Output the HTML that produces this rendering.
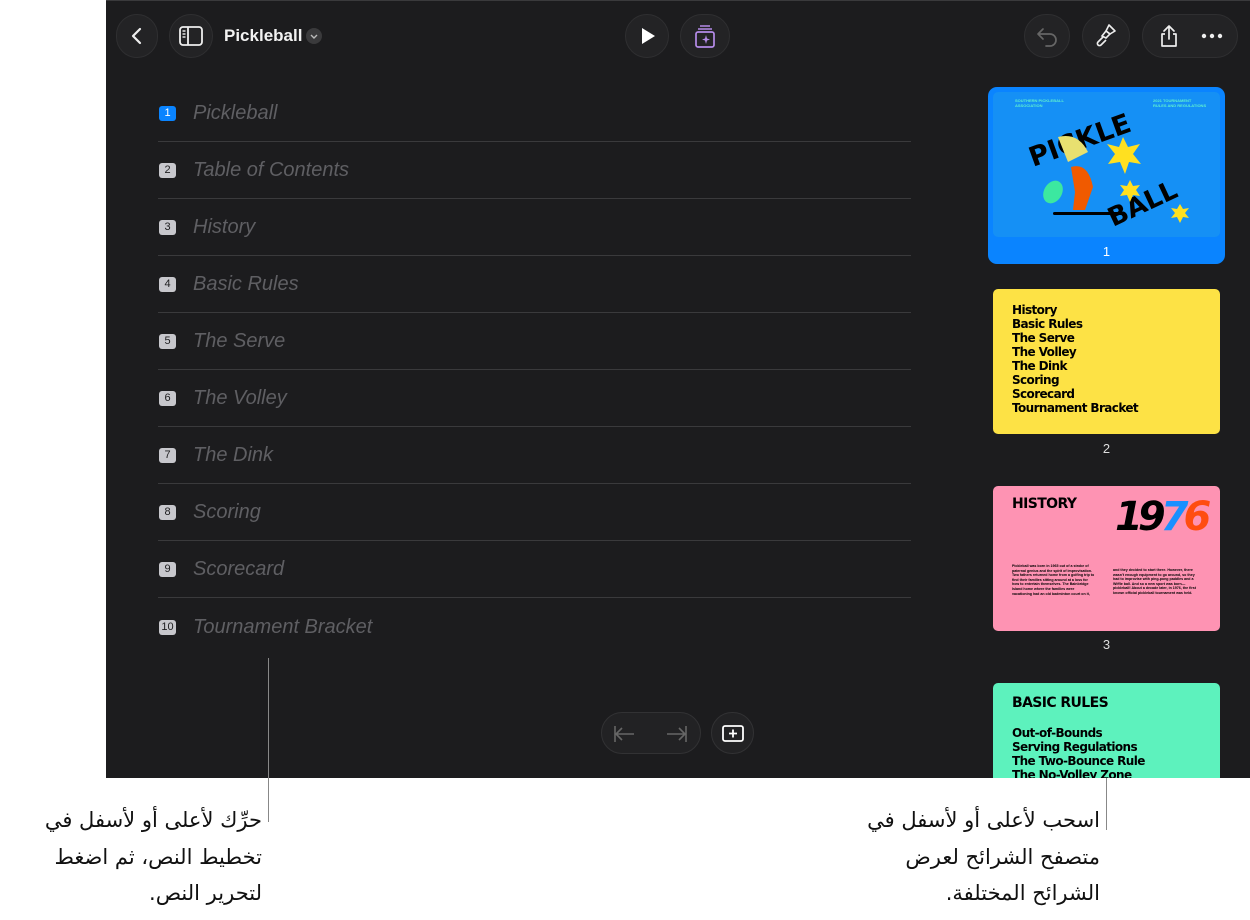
<!DOCTYPE html>
<html><head><meta charset="utf-8">
<style>
*{margin:0;padding:0;box-sizing:border-box}
body{width:1250px;height:920px;background:#fff;position:relative;overflow:hidden;font-family:"Liberation Sans",sans-serif}
#scr{position:absolute;left:106px;top:0;width:1144px;height:778px;background:#1c1c1e;overflow:hidden;border-top:1px solid #3a3a3c}
.btn{position:absolute;top:13px;height:44px;border-radius:22px;background:#232325;border:1px solid #2f2f31;display:flex;align-items:center;justify-content:center}
.row{position:absolute;left:52px;width:753px;height:57px;border-bottom:1px solid #3a3a3c}
.row .b{position:absolute;left:1px;top:21px;height:15px;min-width:17px;padding:0 2px;border-radius:3px;background:#c7c7cc;color:#1c1c1e;font-size:11px;line-height:15px;text-align:center}
.row .t{position:absolute;left:35px;top:17px;font-size:20px;font-style:italic;color:#5f5f63}
.sl{position:absolute;left:887px;width:227px;height:145px;border-radius:5px;overflow:hidden}
.num{position:absolute;left:887px;width:227px;text-align:center;color:#ddd;font-size:13px}
.slt{font-weight:bold;color:#000;font-size:12px;line-height:14px;font-family:"DejaVu Sans",sans-serif;letter-spacing:-0.6px}
.ar{position:absolute;font-family:"DejaVu Sans","Noto Sans CJK SC",sans-serif;font-size:21px;line-height:36.5px;text-align:right;direction:rtl;color:#111}
</style></head><body>
<div id="scr">
 <div class="btn" style="left:10px;width:42px"><svg width="20" height="20" viewBox="0 0 20 20"><path d="M13 3 L6 10 L13 17" stroke="#eee" stroke-width="2.2" fill="none" stroke-linecap="round" stroke-linejoin="round"/></svg></div>
 <div class="btn" style="left:63px;width:44px"><svg width="26" height="22" viewBox="0 0 26 22"><rect x="2" y="2" width="22" height="18" rx="3" stroke="#eee" stroke-width="1.8" fill="none"/><line x1="10" y1="2" x2="10" y2="20" stroke="#eee" stroke-width="1.8"/><line x1="4.5" y1="6" x2="7.5" y2="6" stroke="#eee" stroke-width="1.4"/><line x1="4.5" y1="9" x2="7.5" y2="9" stroke="#eee" stroke-width="1.4"/><line x1="4.5" y1="12" x2="7.5" y2="12" stroke="#eee" stroke-width="1.4"/></svg></div>
 <div style="position:absolute;left:118px;top:25px;color:#f2f2f2;font-weight:bold;font-size:17px">Pickleball</div>
 <div style="position:absolute;left:200px;top:27px;width:16px;height:16px;border-radius:8px;background:#3a3a3c"><svg width="16" height="16"><path d="M5 7 L8 10 L11 7" stroke="#bbb" stroke-width="1.4" fill="none"/></svg></div>
 <div class="btn" style="left:519px;width:44px"><svg width="20" height="20"><path d="M5 2 L18 10 L5 18 Z" fill="#fff"/></svg></div>
 <div class="btn" style="left:574px;width:50px"><svg width="26" height="26" viewBox="0 0 26 26"><line x1="8" y1="3" x2="18" y2="3" stroke="#b58be8" stroke-width="1.5"/><line x1="6" y1="6" x2="20" y2="6" stroke="#b58be8" stroke-width="1.5"/><rect x="4" y="9" width="18" height="15" rx="2" stroke="#b58be8" stroke-width="1.7" fill="none"/><path d="M14 12 L15 15.5 L18 16.5 L15 17.5 L14 21 L13 17.5 L10 16.5 L13 15.5Z" fill="#b58be8"/></svg></div>
 <div class="btn" style="left:918px;width:46px"><svg width="24" height="22"><path d="M8 4 L3 9 L8 14 M3 9 H15 A6 6 0 0 1 15 21 H11" stroke="#666" stroke-width="1.7" fill="none" stroke-linecap="round" stroke-linejoin="round"/></svg></div>
 <div class="btn" style="left:976px;width:48px"><svg width="24" height="26" viewBox="0 0 24 26"><path d="M15 2 L21 8 L16 11 L12 8 Z" stroke="#eee" stroke-width="1.6" fill="none" stroke-linejoin="round"/><path d="M12 8 L16 11 L12 15 L8 13 Z" stroke="#eee" stroke-width="1.6" fill="none"/><path d="M9 14 L4 19 A2 2 0 0 0 7 22 L12 17" stroke="#eee" stroke-width="1.6" fill="none"/></svg></div>
 <div class="btn" style="left:1036px;width:96px;justify-content:space-between;padding:0 14px 0 16px"><svg width="20" height="24" viewBox="0 0 20 24"><path d="M10 2 V15 M5 7 L10 2 L15 7" stroke="#eee" stroke-width="1.7" fill="none" stroke-linecap="round" stroke-linejoin="round"/><path d="M6 10 H3 V22 H17 V10 H14" stroke="#eee" stroke-width="1.7" fill="none" stroke-linejoin="round"/></svg><svg width="22" height="6"><circle cx="3" cy="3" r="2.2" fill="#eee"/><circle cx="11" cy="3" r="2.2" fill="#eee"/><circle cx="19" cy="3" r="2.2" fill="#eee"/></svg></div>

 <div class="row" style="top:84px"><div class="b" style="background:#0a84ff;color:#fff">1</div><div class="t">Pickleball</div></div>
 <div class="row" style="top:141px"><div class="b">2</div><div class="t">Table of Contents</div></div>
 <div class="row" style="top:198px"><div class="b">3</div><div class="t">History</div></div>
 <div class="row" style="top:255px"><div class="b">4</div><div class="t">Basic Rules</div></div>
 <div class="row" style="top:312px"><div class="b">5</div><div class="t">The Serve</div></div>
 <div class="row" style="top:369px"><div class="b">6</div><div class="t">The Volley</div></div>
 <div class="row" style="top:426px"><div class="b">7</div><div class="t">The Dink</div></div>
 <div class="row" style="top:483px"><div class="b">8</div><div class="t">Scoring</div></div>
 <div class="row" style="top:540px"><div class="b">9</div><div class="t">Scorecard</div></div>
 <div class="row" style="top:598px;border-bottom:none"><div class="b">10</div><div class="t">Tournament Bracket</div></div>

 <div style="position:absolute;left:495px;top:711px;width:100px;height:42px;border-radius:21px;background:#222224;border:1px solid #323234">
  <svg width="100" height="42" style="position:absolute;left:0;top:0"><path d="M13 13 V29 M14 21 H32 M20 15 L14 21 L20 27" stroke="#666" stroke-width="1.6" fill="none"/><path d="M84 13 V29 M65 21 H83 M77 15 L83 21 L77 27" stroke="#666" stroke-width="1.6" fill="none"/></svg>
 </div>
 <div style="position:absolute;left:605px;top:711px;width:43px;height:42px;border-radius:21px;background:#222224;border:1px solid #323234"><svg width="43" height="42"><rect x="11" y="13" width="20" height="15" rx="2" stroke="#fff" stroke-width="1.8" fill="none"/><path d="M21 16.5 V24.5 M17 20.5 H25" stroke="#fff" stroke-width="1.8"/></svg></div>

 <div style="position:absolute;left:882px;top:86px;width:237px;height:177px;border-radius:9px;background:#0a84ff"></div>
 <div class="sl" style="top:91px;background:#1590f5">
  <div style="position:absolute;left:22px;top:6px;color:#5ef0d0;font-size:4px;font-weight:bold">SOUTHERN PICKLEBALL<br>ASSOCIATION</div>
  <div style="position:absolute;left:160px;top:6px;color:#5ef0d0;font-size:4px;font-weight:bold">2021 TOURNAMENT<br>RULES AND REGULATIONS</div>
  <svg width="227" height="145" style="position:absolute;left:0;top:0">
   <text x="40" y="75" font-family="DejaVu Sans" font-weight="bold" font-size="27" fill="#000" transform="rotate(-20 40 75)">PICKLE</text>
   <text x="120" y="135" font-family="DejaVu Sans" font-weight="bold" font-size="26" fill="#000" transform="rotate(-25 120 135)">BALL</text>
   <path d="M78 75 Q95 70 100 95 L92 118 L80 118 L82 100 Z" fill="#f05a00"/>
   <path d="M65 45 Q85 40 95 60 L75 70 Z" fill="#e8e070"/>
   <ellipse cx="60" cy="100" rx="9" ry="12" fill="#3ce8a0" transform="rotate(30 60 100)"/>
   <path d="M130 45 L135 55 L147 52 L140 62 L148 72 L136 70 L132 82 L127 70 L115 72 L122 62 L114 52 L126 55Z" fill="#ffe020"/>
   <path d="M137 88 L140 94 L147 93 L143 98 L147 104 L140 103 L137 110 L134 103 L127 104 L131 98 L127 93 L134 94Z" fill="#ffe020"/>
   <path d="M187 112 L190 117 L196 116 L192 121 L196 126 L190 125 L187 131 L184 125 L178 126 L182 121 L178 116 L184 117Z" fill="#ffe020"/>
   <rect x="60" y="120" width="70" height="3" rx="1.5" fill="#000"/>
  </svg>
 </div>
 <div class="num" style="top:243px;color:#fff">1</div>

 <div class="sl" style="top:288px;background:#fde245"><div class="slt" style="position:absolute;left:19px;top:14px">History<br>Basic Rules<br>The Serve<br>The Volley<br>The Dink<br>Scoring<br>Scorecard<br>Tournament Bracket</div></div>
 <div class="num" style="top:440px">2</div>

 <div class="sl" style="top:485px;background:#fe93b3">
  <div class="slt" style="position:absolute;left:19px;top:11px;font-size:14px">HISTORY</div>
  <div style="position:absolute;left:122px;top:8px;font-family:'DejaVu Sans';font-weight:bold;font-style:italic;font-size:40px;letter-spacing:-5px;line-height:46px"><span style="color:#000">19</span><span style="color:#1a90ff">7</span><span style="color:#ff4d10">6</span></div>
  <div style="position:absolute;left:19px;top:78px;width:83px;font-size:3.6px;line-height:4.6px;font-weight:bold;color:#000">Pickleball was born in 1965 out of a stroke of paternal genius and the spirit of improvisation. Two fathers returned home from a golfing trip to find their families sitting around at a loss for how to entertain themselves. The Bainbridge Island home where the families were vacationing had an old badminton court on it,</div>
  <div style="position:absolute;left:120px;top:82px;width:85px;font-size:3.6px;line-height:4.6px;font-weight:bold;color:#000">and they decided to start there. However, there wasn't enough equipment to go around, so they had to improvise with ping-pong paddles and a Wiffle ball. And so a new sport was born—pickleball! About a decade later, in 1976, the first known official pickleball tournament was held.</div>
 </div>
 <div class="num" style="top:636px">3</div>

 <div class="sl" style="top:682px;background:#5df2bd;height:100px">
  <div class="slt" style="position:absolute;left:19px;top:13px;font-size:14px">BASIC RULES</div>
  <div class="slt" style="position:absolute;left:19px;top:43px">Out-of-Bounds<br>Serving Regulations<br>The Two-Bounce Rule<br>The No-Volley Zone</div>
 </div>
</div>

<div style="position:absolute;left:268px;top:658px;width:1px;height:164px;background:#888"></div>
<div style="position:absolute;left:1106px;top:778px;width:1px;height:52px;background:#888"></div>
<div class="ar" style="right:988px;top:802px;width:300px">حرِّك لأعلى أو لأسفل في<br>تخطيط النص، ثم اضغط<br>لتحرير النص.</div>
<div class="ar" style="right:150px;top:802px;width:320px">اسحب لأعلى أو لأسفل في<br>متصفح الشرائح لعرض<br>الشرائح المختلفة.</div>
</body></html>
